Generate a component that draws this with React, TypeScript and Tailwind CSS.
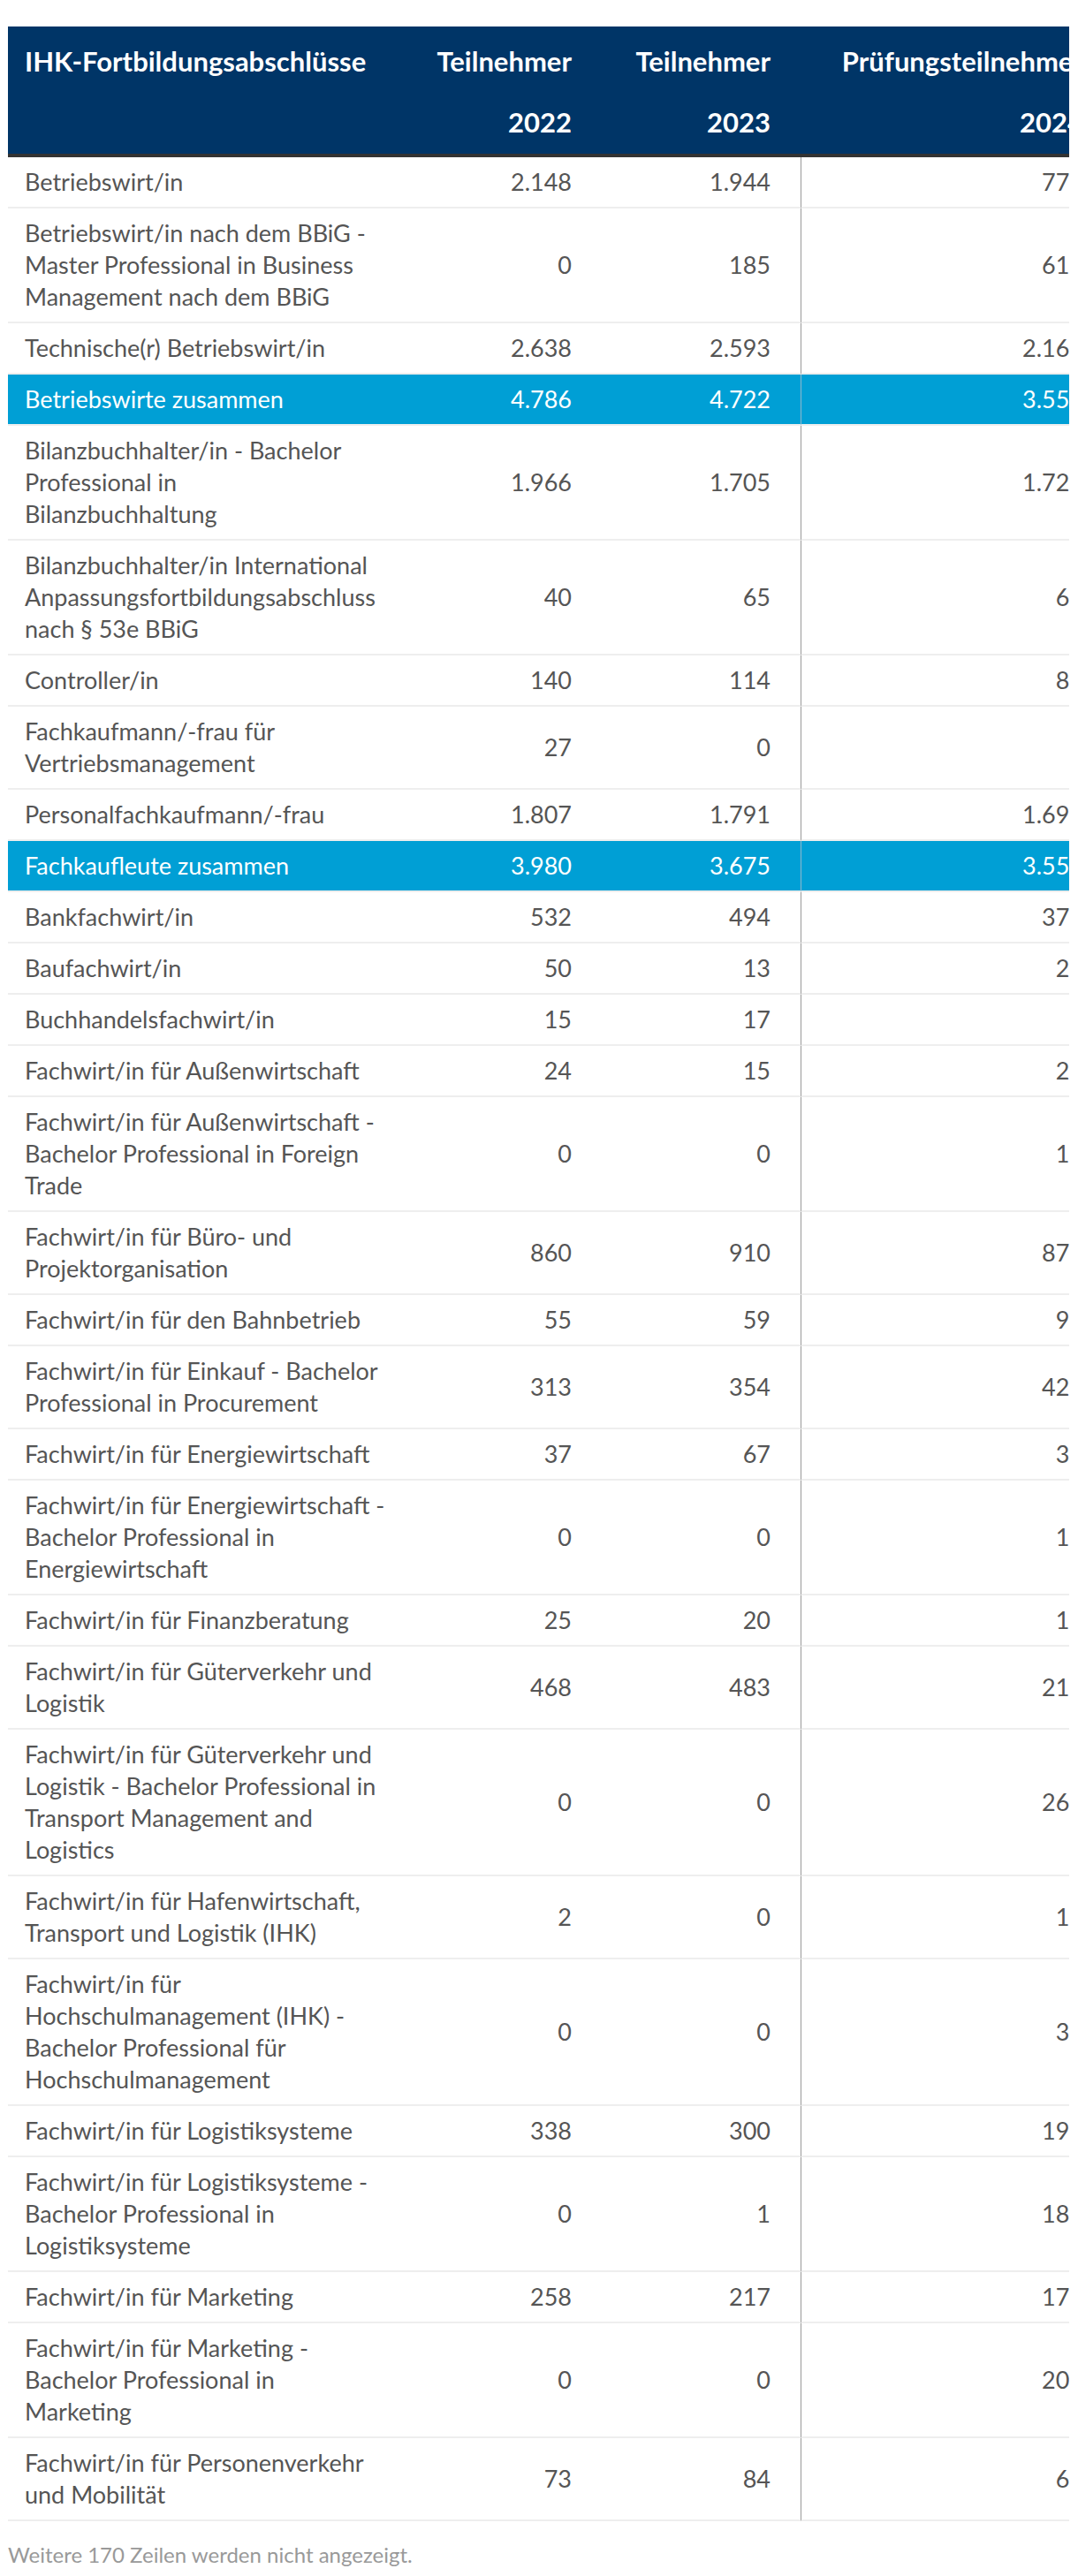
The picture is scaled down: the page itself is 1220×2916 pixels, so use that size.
import React from 'react';

type Row = {
  label: string[];
  v2022: string;
  v2023: string;
  v2024: string;
  total?: boolean;
};

const rows: Row[] = [
  { label: ['Betriebswirt/in'], v2022: '2.148', v2023: '1.944', v2024: '773' },
  {
    label: ['Betriebswirt/in nach dem BBiG -', 'Master Professional in Business', 'Management nach dem BBiG'],
    v2022: '0',
    v2023: '185',
    v2024: '612',
  },
  { label: ['Technische(r) Betriebswirt/in'], v2022: '2.638', v2023: '2.593', v2024: '2.164' },
  { label: ['Betriebswirte zusammen'], v2022: '4.786', v2023: '4.722', v2024: '3.556', total: true },
  {
    label: ['Bilanzbuchhalter/in - Bachelor', 'Professional in', 'Bilanzbuchhaltung'],
    v2022: '1.966',
    v2023: '1.705',
    v2024: '1.725',
  },
  {
    label: ['Bilanzbuchhalter/in International', 'Anpassungsfortbildungsabschluss', 'nach § 53e BBiG'],
    v2022: '40',
    v2023: '65',
    v2024: '63',
  },
  { label: ['Controller/in'], v2022: '140', v2023: '114', v2024: '85' },
  { label: ['Fachkaufmann/-frau für', 'Vertriebsmanagement'], v2022: '27', v2023: '0', v2024: '4' },
  { label: ['Personalfachkaufmann/-frau'], v2022: '1.807', v2023: '1.791', v2024: '1.693' },
  { label: ['Fachkaufleute zusammen'], v2022: '3.980', v2023: '3.675', v2024: '3.551', total: true },
  { label: ['Bankfachwirt/in'], v2022: '532', v2023: '494', v2024: '372' },
  { label: ['Baufachwirt/in'], v2022: '50', v2023: '13', v2024: '21' },
  { label: ['Buchhandelsfachwirt/in'], v2022: '15', v2023: '17', v2024: '7' },
  { label: ['Fachwirt/in für Außenwirtschaft'], v2022: '24', v2023: '15', v2024: '25' },
  {
    label: ['Fachwirt/in für Außenwirtschaft -', 'Bachelor Professional in Foreign', 'Trade'],
    v2022: '0',
    v2023: '0',
    v2024: '14',
  },
  { label: ['Fachwirt/in für Büro- und', 'Projektorganisation'], v2022: '860', v2023: '910', v2024: '873' },
  { label: ['Fachwirt/in für den Bahnbetrieb'], v2022: '55', v2023: '59', v2024: '94' },
  {
    label: ['Fachwirt/in für Einkauf - Bachelor', 'Professional in Procurement'],
    v2022: '313',
    v2023: '354',
    v2024: '426',
  },
  { label: ['Fachwirt/in für Energiewirtschaft'], v2022: '37', v2023: '67', v2024: '36' },
  {
    label: ['Fachwirt/in für Energiewirtschaft -', 'Bachelor Professional in', 'Energiewirtschaft'],
    v2022: '0',
    v2023: '0',
    v2024: '12',
  },
  { label: ['Fachwirt/in für Finanzberatung'], v2022: '25', v2023: '20', v2024: '18' },
  { label: ['Fachwirt/in für Güterverkehr und', 'Logistik'], v2022: '468', v2023: '483', v2024: '214' },
  {
    label: [
      'Fachwirt/in für Güterverkehr und',
      'Logistik - Bachelor Professional in',
      'Transport Management and',
      'Logistics',
    ],
    v2022: '0',
    v2023: '0',
    v2024: '263',
  },
  {
    label: ['Fachwirt/in für Hafenwirtschaft,', 'Transport und Logistik (IHK)'],
    v2022: '2',
    v2023: '0',
    v2024: '11',
  },
  {
    label: ['Fachwirt/in für', 'Hochschulmanagement (IHK) -', 'Bachelor Professional für', 'Hochschulmanagement'],
    v2022: '0',
    v2023: '0',
    v2024: '35',
  },
  { label: ['Fachwirt/in für Logistiksysteme'], v2022: '338', v2023: '300', v2024: '193' },
  {
    label: ['Fachwirt/in für Logistiksysteme -', 'Bachelor Professional in', 'Logistiksysteme'],
    v2022: '0',
    v2023: '1',
    v2024: '184',
  },
  { label: ['Fachwirt/in für Marketing'], v2022: '258', v2023: '217', v2024: '176' },
  {
    label: ['Fachwirt/in für Marketing -', 'Bachelor Professional in', 'Marketing'],
    v2022: '0',
    v2023: '0',
    v2024: '207',
  },
  { label: ['Fachwirt/in für Personenverkehr', 'und Mobilität'], v2022: '73', v2023: '84', v2024: '68' },
];

function HeadCell({ title, year }: { title: string; year: string }) {
  return (
    <th className="bg-[#003567] p-0 border-b-4 border-[#333333] align-top">
      <div className="flex h-[144px] flex-col justify-between pt-[21px] pb-[18px] pr-[34px] text-right whitespace-nowrap">
        <span>{title}</span>
        <span>{year}</span>
      </div>
    </th>
  );
}

export default function App() {
  return (
    <div className="min-h-screen bg-white pt-[30px] pl-[9px] font-['Lato',sans-serif]">
      <div className="w-[1201px] overflow-hidden">
        <table className="w-[1251px] table-fixed border-separate border-spacing-0 text-[27px] leading-[36px]">
          <colgroup>
            <col className="w-[447px]" />
            <col className="w-[225px]" />
            <col className="w-[225px]" />
            <col className="w-[354px]" />
          </colgroup>
          <thead className="text-[31px] font-bold text-white">
            <tr>
              <th className="bg-[#003567] p-0 border-b-4 border-[#333333] align-top text-left">
                <div className="h-[144px] pt-[21px] pl-[19px] whitespace-nowrap">IHK-Fortbildungsabschlüsse</div>
              </th>
              <HeadCell title="Teilnehmer" year="2022" />
              <HeadCell title="Teilnehmer" year="2023" />
              <HeadCell title="Prüfungsteilnehmer" year="2024" />
            </tr>
          </thead>
          <tbody>
            {rows.map((r, i) => {
              const cell = r.total
                ? 'bg-[#009fd5] text-white border-b-2 border-[#eeeeee] py-[10px] align-middle'
                : 'text-[#555555] border-b-2 border-[#eeeeee] py-[10px] align-middle';
              const isLast = i === rows.length - 1;
              return (
                <tr key={i}>
                  <td className={`${cell} pl-[19px] pr-[20px] whitespace-nowrap ${isLast ? 'border-b-0' : ''}`}>
                    {r.label.map((l, j) => (
                      <div key={j}>{l}</div>
                    ))}
                  </td>
                  <td className={`${cell} pr-[34px] text-right ${isLast ? 'border-b-0' : ''}`}>{r.v2022}</td>
                  <td className={`${cell} pr-[34px] text-right ${isLast ? 'border-b-0' : ''}`}>{r.v2023}</td>
                  <td
                    className={`${cell} pr-[34px] text-right border-l ${
                      r.total ? 'border-l-[#8fb8cc]' : 'border-l-[#999999]'
                    } ${isLast ? 'border-b-0' : ''}`}
                  >
                    {r.v2024}
                  </td>
                </tr>
              );
            })}
          </tbody>
        </table>
      </div>
      <p className="mt-[20px] text-[24px] leading-[36px] text-[#999999]">Weitere 170 Zeilen werden nicht angezeigt.</p>
    </div>
  );
}
